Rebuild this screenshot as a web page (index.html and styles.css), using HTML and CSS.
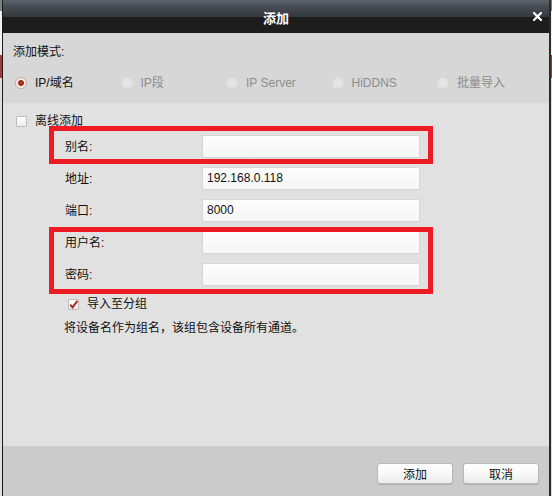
FILE: index.html
```html
<!DOCTYPE html>
<html lang="zh">
<head>
<meta charset="utf-8">
<title>添加</title>
<link rel="stylesheet" href="styles.css">
</head>
<body>
<div class="dialog">
  <div class="titlebar">
    <span></span>
    <span class="title">添加</span>
    <span class="close">
      <svg width="9" height="9" viewBox="0 0 9 9"><path d="M1 1 L8 8 M8 1 L1 8" stroke="#fff" stroke-width="2.2" stroke-linecap="square"/></svg>
    </span>
  </div>
  <div class="mode">
    <div class="mode-label">添加模式:</div>
    <div class="radios">
      <label class="radio-item"><span class="radio checked"></span><span>IP/域名</span></label>
      <label class="radio-item disabled"><span class="radio"></span><span>IP段</span></label>
      <label class="radio-item disabled"><span class="radio"></span><span>IP Server</span></label>
      <label class="radio-item disabled"><span class="radio"></span><span>HiDDNS</span></label>
      <label class="radio-item disabled"><span class="radio"></span><span>批量导入</span></label>
    </div>
  </div>
  <div class="main">
    <div class="check-row offline"><span class="checkbox"></span><span>离线添加</span></div>
    <div class="form">
      <span class="flabel">别名:</span><div class="input"></div>
      <span class="flabel">地址:</span><div class="input">192.168.0.118</div>
      <span class="flabel">端口:</span><div class="input">8000</div>
      <span class="flabel">用户名:</span><div class="input"></div>
      <span class="flabel">密码:</span><div class="input"></div>
    </div>
    <div class="check-row group"><span class="checkbox checked">
      <svg width="11" height="11" viewBox="0 0 11 11"><path d="M2.2 5.6 L4.6 8.4 L9.4 1.8" fill="none" stroke="#a82c24" stroke-width="2"/></svg>
    </span><span>导入至分组</span></div>
    <div class="hint">将设备名作为组名，该组包含设备所有通道。</div>
    <div class="mark mark-1"></div>
    <div class="mark mark-2"></div>
  </div>
  <div class="footer">
    <button class="btn">添加</button>
    <button class="btn">取消</button>
  </div>
</div>
</body>
</html>
```
FILE: styles.css
```css
html, body {
  margin: 0;
  padding: 0;
}
body {
  width: 552px;
  height: 496px;
  overflow: hidden;
  font-family: "Liberation Sans", "Noto Sans CJK SC", sans-serif;
  font-size: 12px;
  color: #111;
  background: linear-gradient(to bottom, #7d8288 0, #7d8288 11px, #f1f1f1 11px, #f1f1f1 55px, #a43a3a 55px, #a43a3a 78px, #dedede 78px, #dedede 100%);
}
.dialog {
  margin-left: 2px;
  width: 546px;
  height: 496px;
  border-left: 1px solid #1b1b1b;
  border-right: 2px solid #2b2b2b;
  display: flex;
  flex-direction: column;
}
.titlebar {
  height: 33px;
  flex: none;
  display: grid;
  grid-template-columns: 1fr auto 1fr;
  align-items: center;
  background: linear-gradient(to bottom, #5e656d 0, #484e55 6px, #33383d 17px, #1d1d1d 17px, #1d1d1d 100%);
}
.title {
  color: #fff;
  font-weight: bold;
  font-size: 13px;
  padding-top: 1px;
}
.close {
  justify-self: end;
  margin-right: 7px;
  display: flex;
}
.mode {
  height: 70px;
  flex: none;
  box-sizing: border-box;
  background: #d7d7d7;
  padding: 11px 0 0 10px;
}
.mode-label {
  line-height: 16px;
}
.radios {
  display: flex;
  margin-top: 15px;
  margin-left: 2px;
}
.radio-item {
  width: 105.5px;
  display: flex;
  align-items: center;
  gap: 8px;
  line-height: 16px;
}
.radio-item.disabled {
  color: #8d8d8d;
}
.radio {
  width: 12px;
  height: 12px;
  border-radius: 50%;
  box-sizing: border-box;
  background: #e4e4e4;
  border: 1px solid #dcdcdc;
}
.radio.checked {
  border: 1px solid #caa996;
  background: radial-gradient(circle, #b0372b 0, #a5301f 2.6px, #f2ece8 3.4px, #f7f4f2 100%);
}
.main {
  flex: 1;
  position: relative;
  background: #e1e1e1;
  padding-top: 10px;
}
.check-row {
  display: flex;
  align-items: center;
  gap: 8px;
  line-height: 16px;
}
.offline {
  margin-left: 13px;
}
.checkbox {
  width: 11px;
  height: 11px;
  box-sizing: border-box;
  border: 1px solid #bcbcbc;
  border-radius: 1px;
  background: linear-gradient(to bottom, #ffffff, #ececec);
  display: flex;
}
.checkbox svg {
  margin: -1px;
}
.form {
  display: grid;
  grid-template-columns: 137px 218px;
  grid-auto-rows: 23px;
  row-gap: 9px;
  margin: 6px 0 0 62px;
  align-items: center;
}
.flabel {
  line-height: 16px;
}
.input {
  height: 23px;
  box-sizing: border-box;
  border: 1px solid #d6d6d6;
  background: linear-gradient(to bottom, #fdfdfd, #f6f6f6);
  padding-left: 4px;
  line-height: 21px;
  color: #111;
}
.group {
  margin: 10px 0 0 65px;
}
.hint {
  margin: 8px 0 0 61px;
  line-height: 16px;
}
.mark {
  position: absolute;
  left: 46px;
  width: 384px;
  box-sizing: border-box;
  border: 5px solid #ed1c24;
}
.mark-1 {
  top: 23px;
  height: 38px;
}
.mark-2 {
  top: 124px;
  height: 67px;
}
.footer {
  height: 50px;
  flex: none;
  box-sizing: border-box;
  background: #cbcbcb;
  display: flex;
  justify-content: flex-end;
  align-items: flex-start;
  gap: 10px;
  padding: 17px 10px 0 0;
}
.btn {
  width: 76px;
  height: 21px;
  padding: 0;
  font-family: "Liberation Sans", "Noto Sans CJK SC", sans-serif;
  font-size: 12px;
  color: #111;
  border: 1px solid #b9b9b9;
  border-radius: 3px;
  background: linear-gradient(to bottom, #ffffff 0, #f9f9f9 50%, #ebebeb 100%);
  box-shadow: 0 1px 1px rgba(0, 0, 0, 0.15);
}
```
